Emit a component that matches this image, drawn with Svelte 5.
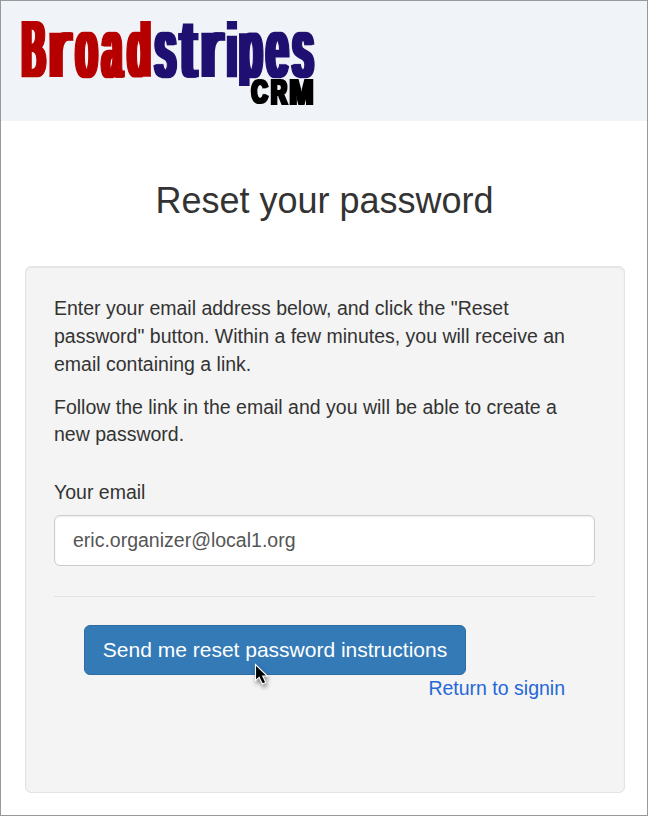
<script>
  // Condensed wordmark: every glyph is stretched to its own box.
  const ctx = document.createElement('canvas').getContext('2d');
  const ink = (ch, weight) => {
    ctx.font = `${weight} 200px "Liberation Sans"`;
    const m = ctx.measureText(ch);
    return { l: -m.actualBoundingBoxLeft, r: m.actualBoundingBoxRight, t: m.actualBoundingBoxAscent, b: m.actualBoundingBoxDescent };
  };

  function place([ch, x0, x1, mode], top, base, g, weight = 'normal') {
    const k = ink(ch, weight);
    const sx = (x1 - x0 - 2 * g) / (k.r - k.l);
    const sy = mode === 'x' ? (base - 32.5) / ink('x', weight).t : (base - top) / (k.t + (mode === 'o' ? k.b : 0));
    const y = mode === 'o' ? base - k.b * sy : base;
    return { ch, t: `translate(${x0 + g - k.l * sx} ${y}) scale(${sx} ${sy})` };
  }

  const red = [['B', 21, 47, 'c'], ['r', 49, 73.5, 'x'], ['o', 74, 99, 'x'], ['a', 100, 125.5, 'x'], ['d', 126, 151.5, 'x']]
    .map((l) => place(l, 22, 75.5, 3.9));
  const blue = [['s', 153, 177.5, 'x'], ['t', 178, 199.5, 'x'], ['r', 201, 225.5, 'x'], ['i', 226.5, 237.5, 'c'], ['p', 238.5, 264, 'x'], ['e', 264.5, 290, 'x'], ['s', 290.5, 315, 'x']]
    .map((l) => place(l, 22, 75.5, 3.9));
  const crm = [['C', 250.5, 269, 'o'], ['R', 270.5, 288.5, 'c'], ['M', 289.5, 313.5, 'c']]
    .map((l) => place(l, 79.5, 103.5, 1.9, 'bold'));

  let email = $state('eric.organizer@local1.org');
</script>

<div class="page">
  <header>
    <svg class="logo" width="320" height="119" viewBox="1 1 320 119" role="img" aria-label="Broadstripes CRM">
      <defs>
        <filter id="wide" x="-5%" y="-5%" width="110%" height="110%" color-interpolation-filters="sRGB">
          <feMorphology operator="dilate" radius="3 0" />
        </filter>
        <filter id="wide1" x="-5%" y="-5%" width="110%" height="110%" color-interpolation-filters="sRGB">
          <feMorphology operator="dilate" radius="1 0" />
        </filter>
        <clipPath id="band"><rect x="15" y="21" width="305" height="65" /></clipPath>
      </defs>
      <g clip-path="url(#band)">
        <g class="red" filter="url(#wide)">
          {#each red as g}<text transform={g.t}>{g.ch}</text>{/each}
        </g>
        <g class="blue" filter="url(#wide)">
          {#each blue as g}<text transform={g.t}>{g.ch}</text>{/each}
        </g>
      </g>
      <g class="crm" filter="url(#wide1)">
        {#each crm as g}<text transform={g.t}>{g.ch}</text>{/each}
      </g>
    </svg>
  </header>

  <h1>Reset your password</h1>

  <main class="well">
    <p>Enter your email address below, and click the "Reset<br />password" button. Within a few minutes, you will receive an<br />email containing a link.</p>
    <p>Follow the link in the email and you will be able to create a<br />new password.</p>
    <form onsubmit={(e) => e.preventDefault()}>
      <label for="email">Your email</label>
      <input id="email" type="text" bind:value={email} />
      <hr />
      <div class="actions">
        <button type="submit">
          Send me reset password instructions
          <svg class="cursor" width="24" height="32" viewBox="0 0 24 32">
            <path d="M4.5 2.5V18.6L8.1 15.3L11.5 22L14.8 20.5L11.7 14H16.3Z" fill="#000" stroke="#fff" stroke-width="1.1" />
          </svg>
        </button>
        <a href="#signin">Return to signin</a>
      </div>
    </form>
  </main>
</div>

<style>
  :global(body) { background: #fff; }
  .page {
    box-sizing: border-box;
    width: 648px;
    height: 816px;
    border: 1px solid #999;
    background: #fff;
    color: #333;
    font-family: "Liberation Sans", Arial, sans-serif;
    font-size: 19.5px;
    line-height: 27.86px;
    overflow: hidden;
  }
  header { height: 120px; background: #f0f4f8; }
  .logo { display: block; }
  .logo text {
    font: 200px "Liberation Sans", Arial, sans-serif;
    stroke-width: 1.8px;
    vector-effect: non-scaling-stroke;
  }
  .red { fill: #b60000; stroke: #b60000; }
  .blue { fill: #1f0f70; stroke: #1f0f70; }
  .crm { fill: #000; stroke: #000; }
  .logo .crm text { font-weight: bold; }
  h1 {
    margin: 60px 0 0;
    padding-left: 1px;
    font-size: 36px;
    line-height: 40px;
    font-weight: 400;
    text-align: center;
  }
  .well {
    box-sizing: border-box;
    height: 527px;
    margin: 45px 22px 0 24px;
    padding: 28px 29px 0 28px;
    border: 1px solid #e3e3e3;
    border-radius: 6px;
    background: #f4f4f4;
    box-shadow: inset 0 1px 2px rgba(0, 0, 0, 0.06);
  }
  p { margin: 0 0 15px; white-space: nowrap; }
  label { display: block; margin-top: 30px; }
  input {
    display: block;
    box-sizing: border-box;
    width: 100%;
    height: 51px;
    margin: 8px 0 0;
    padding: 0 18px 1px;
    border: 1px solid #ccc;
    border-radius: 6px;
    background: #fff;
    color: #555;
    font: inherit;
    box-shadow: inset 0 1px 2px rgba(0, 0, 0, 0.08);
    outline: none;
  }
  hr { height: 1px; margin: 30px 0 28px; border: 0; background: #e2e2e2; }
  .actions { display: flex; flex-direction: column; padding: 0 30px; }
  button {
    position: relative;
    box-sizing: border-box;
    align-self: flex-start;
    width: 382px;
    height: 50px;
    padding: 0;
    border: 1px solid #2e6da4;
    border-radius: 6px;
    background: #337ab7;
    color: #fff;
    font: 21px "Liberation Sans", Arial, sans-serif;
    white-space: nowrap;
  }
  .cursor {
    position: absolute;
    left: 166px;
    top: 36px;
    overflow: visible;
    filter: drop-shadow(1px 3px 2px rgba(0, 0, 0, 0.45));
  }
  a { align-self: flex-end; color: #2467d8; text-decoration: none; }
</style>
